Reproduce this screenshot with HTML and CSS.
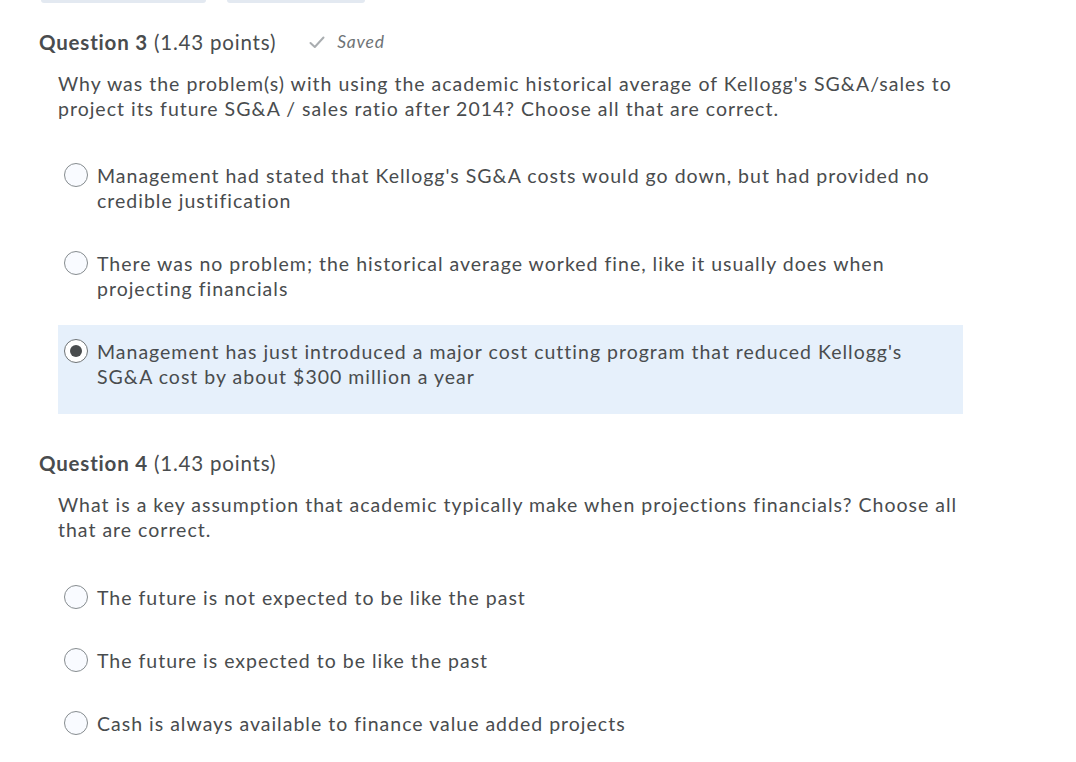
FILE: index.html
```html
<!DOCTYPE html>
<html>
<head>
<meta charset="utf-8">
<link rel="stylesheet" href="styles.css">
</head>
<body>
<div class="topbar">
  <div class="tab tab-a"></div>
  <div class="tab tab-b"></div>
</div>

<section class="question">
  <h2 class="q-head"><strong>Question 3</strong> (1.43 points) <span class="saved"><svg class="check" width="16" height="13" viewBox="0 0 16 13"><path d="M1.5 7 L5.8 11 L14.5 1.5" fill="none" stroke="#a9adb0" stroke-width="2" stroke-linecap="round" stroke-linejoin="round"/></svg><em>Saved</em></span></h2>
  <p class="q-text">Why was the problem(s) with using the academic historical average of Kellogg's SG&amp;A/sales to project its future SG&amp;A / sales ratio after 2014? Choose all that are correct.</p>
  <div class="options">
    <label class="option"><span class="radio"></span><span class="opt-text">Management had stated that Kellogg's SG&amp;A costs would go down, but had provided no credible justification</span></label>
    <label class="option"><span class="radio"></span><span class="opt-text">There was no problem; the historical average worked fine, like it usually does when projecting financials</span></label>
    <label class="option selected"><span class="radio checked"></span><span class="opt-text">Management has just introduced a major cost cutting program that reduced Kellogg's SG&amp;A cost by about $300 million a year</span></label>
  </div>
</section>

<section class="question q4">
  <h2 class="q-head"><strong>Question 4</strong> (1.43 points)</h2>
  <p class="q-text">What is a key assumption that academic typically make when projections financials? Choose all that are correct.</p>
  <div class="options">
    <label class="option"><span class="radio"></span><span class="opt-text">The future is not expected to be like the past</span></label>
    <label class="option"><span class="radio"></span><span class="opt-text">The future is expected to be like the past</span></label>
    <label class="option"><span class="radio"></span><span class="opt-text">Cash is always available to finance value added projects</span></label>
  </div>
</section>
</body>
</html>
```

FILE: styles.css
```css
html, body {
  margin: 0;
  padding: 0;
  background: #ffffff;
}
body {
  font-family: Lato, "Open Sans", "Liberation Sans", sans-serif;
  color: #494c4e;
  width: 1076px;
  height: 762px;
  overflow: hidden;
  font-variant-ligatures: none;
}
.topbar {
  display: flex;
  gap: 21px;
  padding-left: 41px;
  height: 3px;
}
.tab {
  height: 3px;
  background: #e3e9f1;
  border-radius: 0 0 6px 6px;
}
.tab-a { width: 165px; }
.tab-b { width: 138px; }

.question {
  padding-left: 39px;
}
.q-head {
  margin: 27px 0 0 0;
  font-size: 20.5px;
  line-height: 24px;
  font-weight: 400;
  letter-spacing: 0.8px;
  display: flex;
  align-items: center;
}
.q-head strong {
  font-weight: 700;
  margin-right: 6px;
}
.saved {
  display: inline-flex;
  align-items: center;
  margin-left: 33px;
  color: #6e7376;
  font-size: 17.5px;
  letter-spacing: 0.8px;
}
.saved .check {
  margin-right: 12px;
}
.q-text {
  margin: 17px 0 0 19px;
  font-size: 19.5px;
  line-height: 25px;
  letter-spacing: 1px;
  width: 910px;
}
.options {
  margin: 28px 0 0 19px;
  width: 905px;
}
.option {
  display: flex;
  align-items: flex-start;
  padding: 14px 8px 23px 6px;
  margin-bottom: 1px;
  font-size: 19.5px;
  line-height: 25px;
  letter-spacing: 1px;
}
.option.selected {
  background: #e6f0fb;
  padding-bottom: 25px;
}
.radio {
  flex: none;
  width: 22px;
  height: 22px;
  border: 1px solid #868c8f;
  border-radius: 50%;
  background: #f9fbff;
  margin-right: 9px;
  position: relative;
}
.radio.checked {
  border: 1px solid #6e7376;
  background: #ffffff;
}
.radio.checked::after {
  content: "";
  position: absolute;
  left: 5px;
  top: 5px;
  width: 12px;
  height: 12px;
  border-radius: 50%;
  background: #494c4e;
}
.q4 .q-head {
  margin-top: 37px;
}
.q4 .q-text {
  margin-top: 17px;
}
.q4 .options {
  margin-top: 29px;
}
```
